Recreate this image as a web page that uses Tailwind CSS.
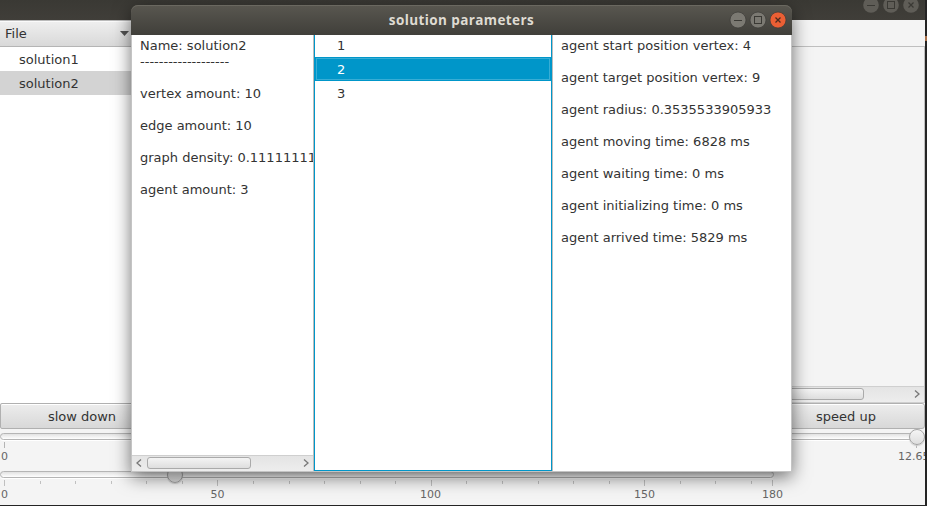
<!DOCTYPE html>
<html lang="en">
<head>
<meta charset="utf-8">
<title>solution parameters</title>
<script src="https://cdn.jsdelivr.net/npm/@tailwindcss/browser@4"></script>
</head>
<body class="relative h-[506px] w-[927px] overflow-hidden bg-[#242424] font-['DejaVu_Sans',sans-serif] text-[13px] leading-4 text-[#333]">

<!-- Main window -->
<div class="flex h-[505px] w-[925px] flex-col overflow-hidden bg-[#f4f4f4]">
  <div class="flex h-5 shrink-0 justify-end gap-1 bg-linear-to-b from-[#3a3934] to-[#403e39] pr-[6px]">
    <svg class="-mt-[3px] h-4 w-4 overflow-visible" viewBox="0 0 16 16"><circle cx="8" cy="8" r="7.8" fill="#5f5d57"/><path d="M4 8.5h8" stroke="#3a3934"/></svg>
    <svg class="-mt-[3px] h-4 w-4 overflow-visible" viewBox="0 0 16 16"><circle cx="8" cy="8" r="7.8" fill="#5f5d57"/><rect x="4.5" y="4.5" width="7" height="7" fill="none" stroke="#3a3934"/></svg>
    <svg class="-mt-[3px] h-4 w-4 overflow-visible" viewBox="0 0 16 16"><circle cx="8" cy="8" r="7.8" fill="#5f5d57"/><path d="M5.500 5.500l5 5M10.500 5.500l-5 5" stroke="#3a3934" stroke-width="1.2"/></svg>
  </div>

  <div class="flex h-[383px] shrink-0">
    <div class="flex w-[132px] flex-col bg-white">
      <div class="flex h-[27px] items-center justify-between border-t border-b border-t-[#bababa] border-b-[#b5b5b5] bg-linear-to-b from-[#efefef] to-[#d9d9d9] pr-[3px] pl-[5px] shadow-[inset_0_1px_0_#fafafa]">
        <span>File</span>
        <svg class="h-[5px] w-[9px]" viewBox="0 0 9 5"><path d="M0 0h9L4.500 5z" fill="#545454"/></svg>
      </div>
      <div class="h-6 pt-[5px] pl-[19px]">solution1</div>
      <div class="h-6 bg-[#d3d3d3] pt-[5px] pl-[19px]">solution2</div>
    </div>
    <div class="flex flex-1 flex-col">
      <div class="h-[26px]"></div>
      <div class="flex flex-1 flex-col border-t border-r border-[#bfbfbf]">
        <div class="flex-1"></div>
        <div class="flex h-[17px] items-center justify-between border-t border-b border-[#cfcfcf] bg-linear-to-b from-[#e4e4e4] to-[#ededed] pr-[4px] pb-[2px]">
          <div class="h-[12px] w-[732px] rounded-[3px] border border-[#aaa] bg-linear-to-b from-[#f4f4f4] to-[#dedede]"></div>
          <svg class="h-2 w-[6px]" viewBox="0 0 6 8"><path d="M1 .5L5 4 1 7.500" fill="none" stroke="#777" stroke-width="1.3"/></svg>
        </div>
      </div>
    </div>
  </div>

  <div class="flex h-[26px] shrink-0">
    <div class="flex w-[164px] items-center justify-center rounded-[2px] border border-[#b0b0b0] bg-linear-to-b from-[#ededed] to-[#d8d8d8] pt-[2px] shadow-[inset_0_1px_0_#fff]">slow down</div>
    <div class="flex-1"></div>
    <div class="flex w-[158px] items-center justify-center rounded-[3px] border border-[#b0b0b0] bg-linear-to-b from-[#ededed] to-[#d8d8d8] pt-[2px] shadow-[inset_0_1px_0_#fff]">speed up</div>
  </div>

  <!-- Speed slider -->
  <div class="relative h-[42px] shrink-0 pt-1 text-[11px] leading-[13px] text-[#666]">
    <div class="h-[7px] w-[925px] rounded-[4px] border border-[#b5b5b5] bg-linear-to-b from-[#e2e2e2] to-white shadow-[0_1px_0_#fff]"></div>
    <div class="mt-[2px] flex h-[6px] justify-between pr-[8px] pl-1"><i class="w-px bg-[#b4b4b4]"></i><i class="w-px bg-[#b4b4b4]"></i></div>
    <div class="mt-[2px] flex justify-between pl-px"><span>0</span><span class="w-[27px]">12.65</span></div>
    <div class="absolute top-0 right-0 h-4 w-4 rounded-full border border-[#a5a5a5] bg-linear-to-b from-[#f5f5f5] to-[#dedede] shadow-[0_1px_1px_#ccc]"></div>
  </div>

  <!-- Timeline slider -->
  <div class="relative flex-1 text-[11px] leading-[13px] text-[#666]">
    <div class="h-[7px] w-[774px] rounded-[4px] border border-[#b5b5b5] bg-linear-to-b from-[#e2e2e2] to-white shadow-[0_1px_0_#fff]"></div>
    <div class="absolute -top-[4px] left-[167px] h-4 w-4 rounded-full border border-[#a5a5a5] bg-linear-to-b from-[#f5f5f5] to-[#dedede] shadow-[0_1px_1px_#ccc]"></div>
    <svg class="mt-[2px] block h-[6px] w-[780px]" viewBox="0 0 780 6" shape-rendering="crispEdges">
      <path d="M4.500 0v6M217.500 0v6M431.500 0v6M644.500 0v6M772.500 0v6M40.500 1v3M75.500 1v3M111.500 1v3M146.500 1v3M182.500 1v3M253.500 1v3M289.500 1v3M324.500 1v3M360.500 1v3M395.500 1v3M466.500 1v3M502.500 1v3M538.500 1v3M573.500 1v3M609.500 1v3M680.500 1v3M715.500 1v3M751.500 1v3" stroke="#c0c0c0"/>
    </svg>
    <div class="mt-[2px] grid grid-cols-[111px_213px_214px_170px_86px] text-center">
      <span class="pl-px text-left">0</span><span>50</span><span class="-ml-px">100</span><span class="ml-[43px]">150</span><span class="ml-[43px]">180</span>
    </div>
  </div>
</div>

<!-- Content of the desktop behind the window edge -->
<div class="absolute top-[36px] right-0 h-[5px] w-[2px] bg-[#a86f48]"></div>

<!-- Dialog -->
<div class="absolute top-[5px] left-[131px] flex h-[467px] w-[661px] flex-col rounded-t-[7px] shadow-[0_5px_18px_rgba(0,0,0,0.55)]">
  <div class="grid h-[30px] shrink-0 grid-cols-[1fr_auto_1fr] items-center rounded-t-[7px] bg-linear-to-b from-[#595750] to-[#403f3a] shadow-[inset_0_1px_0_#6a6860]">
    <span></span>
    <h1 class="font-['Open_Sans',sans-serif] text-[13.5px] font-bold tracking-[0.4px] text-[#dfdbd2]">solution parameters</h1>
    <div class="flex justify-end gap-1 pr-[6px]">
      <svg class="h-4 w-4 overflow-visible" viewBox="0 0 16 16"><circle cx="8" cy="8" r="8" fill="#7b7972" stroke="#3b3a36" stroke-width=".7"/><path d="M4 8.500h8" stroke="#3a3934"/></svg>
      <svg class="h-4 w-4 overflow-visible" viewBox="0 0 16 16"><circle cx="8" cy="8" r="8" fill="#7b7972" stroke="#3b3a36" stroke-width=".7"/><rect x="4.500" y="4.500" width="7" height="7" fill="none" stroke="#3a3934"/></svg>
      <svg class="h-4 w-4 overflow-visible" viewBox="0 0 16 16"><circle cx="8" cy="8" r="8" fill="#eb5f34" stroke="#3b3a36" stroke-width=".7"/><path d="M5.500 5.500l5 5M10.500 5.500l-5 5" stroke="#4b2b1e" stroke-width="1.300"/></svg>
    </div>
  </div>
  <div class="flex flex-1 border-r border-b border-l border-[#c4c4c4] bg-white">
    <div class="flex w-[181px] flex-col overflow-hidden">
      <div class="flex-1 overflow-hidden pt-[3px] pl-2 whitespace-pre">Name: solution2
-------------------

vertex amount: 10

edge amount: 10

graph density: 0.111111111

agent amount: 3</div>
      <div class="flex h-4 items-center border-t border-[#cfcfcf] bg-linear-to-b from-[#e4e4e4] to-[#ededed] pr-[4px] pb-[2px] pl-[4px]">
        <svg class="h-2 w-[6px]" viewBox="0 0 6 8"><path d="M5 .5L1 4l4 3.500" fill="none" stroke="#777" stroke-width="1.300"/></svg>
        <div class="ml-[5px] h-[12px] w-[104px] rounded-[3px] border border-[#aaa] bg-linear-to-b from-[#f4f4f4] to-[#dedede]"></div>
        <svg class="ml-auto h-2 w-[6px]" viewBox="0 0 6 8"><path d="M1 .5L5 4 1 7.500" fill="none" stroke="#777" stroke-width="1.300"/></svg>
      </div>
    </div>
    <div class="flex w-[240px] border-r border-l border-[#bcbcbc]">
      <div class="w-[238px] border-r border-b border-l border-[#0096c9]">
        <div class="h-[22px] pt-[3px] pl-[22px]">1</div>
        <div class="h-6 bg-[#0096c9] p-px text-white"><div class="h-[22px] border border-[#38add5] pt-[3px] pl-[20px]">2</div></div>
        <div class="h-6 pt-[5px] pl-[22px]">3</div>
      </div>
    </div>
    <div class="flex-1 pt-[3px] pl-2 whitespace-pre">agent start position vertex: 4

agent target position vertex: 9

agent radius: 0.3535533905933

agent moving time: 6828 ms

agent waiting time: 0 ms

agent initializing time: 0 ms

agent arrived time: 5829 ms</div>
  </div>
</div>
</body>
</html>
